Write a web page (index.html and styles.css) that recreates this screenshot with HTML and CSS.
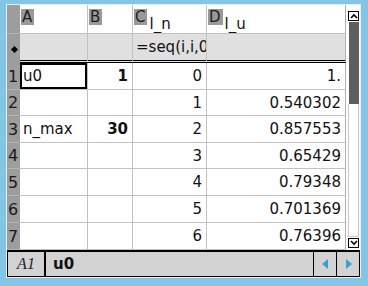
FILE: index.html
```html
<!DOCTYPE html>
<html lang="en">
<head>
    <meta charset="UTF-8">
    <title>Lists &amp; Spreadsheet</title>
    <link rel="stylesheet" href="styles.css">
</head>
<body>
    <div class="app">
        <div class="sheet">
            <table class="grid">
                <colgroup>
                    <col class="c-rn"><col class="c-a"><col class="c-b"><col class="c-c"><col class="c-d">
                </colgroup>
                <!-- column headers -->
                <tr class="head">
                    <th class="rn"></th>
                    <th><span class="letter">A</span></th>
                    <th><span class="letter">B</span></th>
                    <th><span class="letter">C</span><span class="name">l_n</span></th>
                    <th><span class="letter">D</span><span class="name">l_u</span></th>
                </tr>
                <!-- formula row -->
                <tr class="formula">
                    <th class="rn"><span class="diamond"></span></th>
                    <td></td>
                    <td></td>
                    <td class="f">=seq(i,i,0</td>
                    <td></td>
                </tr>
                <tr class="r27">
                    <th class="rn">1</th>
                    <td class="sel">u0</td>
                    <td class="num bold">1</td>
                    <td class="num">0</td>
                    <td class="num">1.</td>
                </tr>
                <tr class="r26">
                    <th class="rn">2</th>
                    <td></td><td></td>
                    <td class="num">1</td>
                    <td class="num">0.540302</td>
                </tr>
                <tr class="r27">
                    <th class="rn">3</th>
                    <td>n_max</td>
                    <td class="num bold">30</td>
                    <td class="num">2</td>
                    <td class="num">0.857553</td>
                </tr>
                <tr class="r26">
                    <th class="rn">4</th>
                    <td></td><td></td>
                    <td class="num">3</td>
                    <td class="num">0.65429</td>
                </tr>
                <tr class="r27">
                    <th class="rn">5</th>
                    <td></td><td></td>
                    <td class="num">4</td>
                    <td class="num">0.79348</td>
                </tr>
                <tr class="r27">
                    <th class="rn">6</th>
                    <td></td><td></td>
                    <td class="num">5</td>
                    <td class="num">0.701369</td>
                </tr>
                <tr class="r27">
                    <th class="rn">7</th>
                    <td></td><td></td>
                    <td class="num">6</td>
                    <td class="num">0.76396</td>
                </tr>
            </table>

            <!-- vertical scrollbar -->
            <div class="vscroll">
                <div class="sbtn">
                    <svg width="8" height="6" viewBox="0 0 8 6"><path d="M1 5 L4 2 L7 5" fill="none" stroke="#000" stroke-width="1.6"/></svg>
                </div>
                <div class="thumb"></div>
                <div class="track"></div>
                <div class="sbtn">
                    <svg width="8" height="6" viewBox="0 0 8 6"><path d="M1 1 L4 4 L7 1" fill="none" stroke="#000" stroke-width="1.6"/></svg>
                </div>
            </div>
        </div>

        <!-- entry line -->
        <div class="bar">
            <div class="ref">A1</div>
            <div class="val">u0</div>
            <div class="nav">
                <div class="arrow"><svg width="7" height="10" viewBox="0 0 7 10"><path d="M6 0 L0 5 L6 10 Z" fill="#3d9bd3"/></svg></div>
                <div class="arrow"><svg width="7" height="10" viewBox="0 0 7 10"><path d="M1 0 L7 5 L1 10 Z" fill="#3d9bd3"/></svg></div>
            </div>
        </div>
    </div>
</body>
</html>
```

FILE: styles.css
```css
body {
    margin: 0;
    padding: 4px 7px 8px 6px;
    background: #82c5e4;
    font-family: "DejaVu Sans", Verdana, sans-serif;
    font-size: 15px;
    color: #111;
}
.app {
    width: 353px;
    height: 272px;
    border: 1px solid #e2f1f9;
    background: #fff;
    display: flex;
    flex-direction: column;
}
.sheet {
    display: flex;
    height: 245px;
}
.grid {
    width: 339px;
    table-layout: fixed;
    border-collapse: separate;
    border-spacing: 0;
}
.c-rn { width: 13px; }
.c-a { width: 68px; }
.c-b { width: 45px; }
.c-c { width: 74px; }
.c-d { width: 139px; }
.grid th,
.grid td {
    padding: 0 4px 0 3px;
    border-right: 1px solid #c2c2c2;
    border-bottom: 1px solid #c2c2c2;
    white-space: nowrap;
    overflow: hidden;
    font-weight: normal;
    text-align: left;
    vertical-align: middle;
}
.grid td:last-child,
.grid th:last-child {
    border-right: 1px solid #b0b0b0;
}
.grid .rn {
    padding: 0 0 0 1px;
    background: #9d9d9d;
    border-right: none;
    border-bottom-color: #b4b4b4;
    color: #1a1a1a;
    font-size: 16px;
}
.head {
    height: 29px;
}
.head th {
    vertical-align: top;
    padding: 4px 0 0 1px;
}
.letter {
    display: inline-block;
    background: #999;
    color: #1e1e1e;
    font-size: 15px;
    line-height: 16px;
    padding: 0 2px 0 1px;
    vertical-align: top;
}
.name {
    display: inline-block;
    vertical-align: top;
    padding: 7px 0 0 2px;
    line-height: 17px;
}
.formula {
    height: 29px;
}
.formula td {
    background: #e0e0e0;
    border-bottom: 3px double #000;
}
.formula .rn {
    border-bottom: 3px solid #9d9d9d;
    text-align: center;
}
.diamond {
    display: inline-block;
    width: 5px;
    height: 5px;
    background: #000;
    transform: rotate(45deg);
    margin: 0 0 1px 1px;
}
.r27 { height: 27px; }
.r26 { height: 26px; }
.num {
    text-align: right !important;
}
.bold {
    font-weight: bold !important;
}
.grid td.sel {
    box-shadow: inset 0 0 0 2px #000;
}
.vscroll {
    width: 14px;
    display: flex;
    flex-direction: column;
    align-items: center;
    padding: 6px 0 2px 0;
    box-sizing: border-box;
}
.sbtn {
    width: 9px;
    height: 8px;
    border: 1px solid #000;
    background: #fff;
    display: flex;
    align-items: center;
    justify-content: center;
    margin-left: 1px;
}
.thumb {
    width: 10px;
    height: 82px;
    background: #5f5f5f;
    margin: 1px 0 0 1px;
}
.track {
    flex: 1;
    width: 9px;
    border: 1px solid #c8c8c8;
    border-top: none;
    margin-left: 1px;
    margin-bottom: 1px;
}
.bar {
    flex: 1;
    display: flex;
    background: #d2d2d2;
    border-top: 2px solid #000;
    border-bottom: 1px solid #000;
    border-left: 1px solid #000;
    border-right: 1px solid #000;
}
.ref {
    width: 36px;
    border-right: 2px solid #000;
    font-family: "Liberation Serif", serif;
    font-style: italic;
    font-size: 16px;
    color: #222;
    display: flex;
    align-items: center;
    justify-content: center;
}
.val {
    flex: 1;
    font-weight: bold;
    padding-left: 7px;
    display: flex;
    align-items: center;
}
.nav {
    display: flex;
}
.arrow {
    width: 22px;
    border-left: 1px solid #000;
    display: flex;
    align-items: center;
    justify-content: center;
}
```
